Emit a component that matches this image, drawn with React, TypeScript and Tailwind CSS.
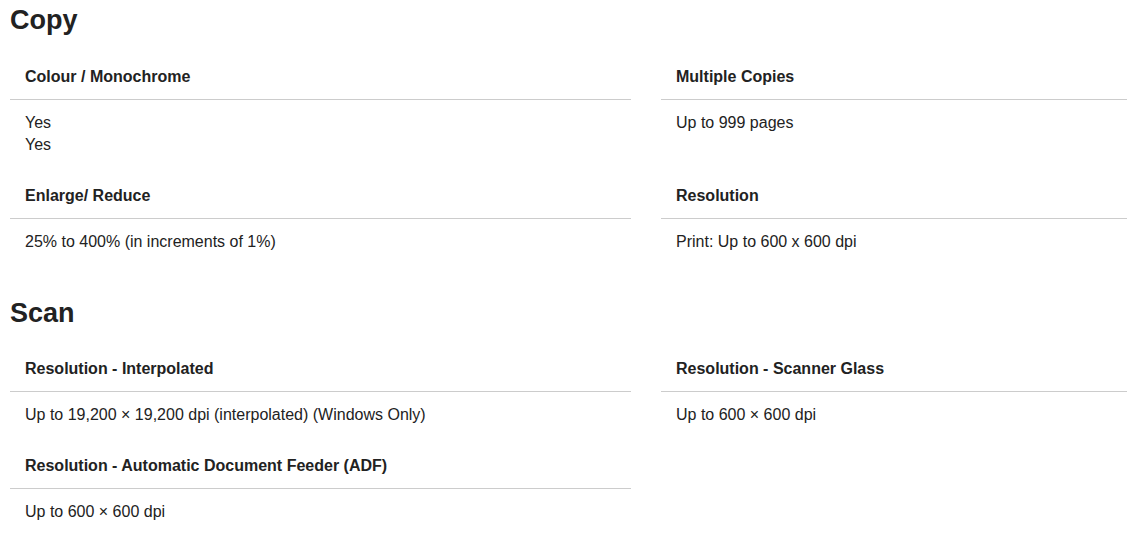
import React from "react";

type Item = { label: string; values: string[] };

const sections: { title: string; items: Item[] }[] = [
  {
    title: "Copy",
    items: [
      { label: "Colour / Monochrome", values: ["Yes", "Yes"] },
      { label: "Multiple Copies", values: ["Up to 999 pages"] },
      { label: "Enlarge/ Reduce", values: ["25% to 400% (in increments of 1%)"] },
      { label: "Resolution", values: ["Print: Up to 600 x 600 dpi"] },
    ],
  },
  {
    title: "Scan",
    items: [
      { label: "Resolution - Interpolated", values: ["Up to 19,200 × 19,200 dpi (interpolated) (Windows Only)"] },
      { label: "Resolution - Scanner Glass", values: ["Up to 600 × 600 dpi"] },
      { label: "Resolution - Automatic Document Feeder (ADF)", values: ["Up to 600 × 600 dpi"] },
    ],
  },
];

export default function App() {
  return (
    <div
      className="w-[1127px] h-[533px] overflow-hidden bg-white pl-[10px] text-[#222]"
      style={{ fontFamily: '"Liberation Sans", Arial, sans-serif' }}
    >
      {sections.map((s, i) => (
        <section key={s.title} className={i === 0 ? "pt-[4px]" : "mt-[40px] pt-[4px]"}>
          <h2 className={i === 0 ? "text-[27px] leading-[32px] font-bold mb-[1px]" : "text-[27px] leading-[32px] font-bold"}>
            {s.title}
          </h2>
          <div className="grid grid-cols-[621px_1fr] gap-x-[30px]">
            {s.items.map((it) => (
              <div key={it.label} className="pt-[28px]">
                <div className="px-[15px] pt-[1px] pb-[11px] border-b border-[#cccccc] text-[16px] leading-[22px] font-bold">
                  {it.label}
                </div>
                <div className="px-[15px] pt-[12px] text-[16px] leading-[22px]">
                  {it.values.map((v, k) => (
                    <div key={k}>{v}</div>
                  ))}
                </div>
              </div>
            ))}
          </div>
        </section>
      ))}
    </div>
  );
}
